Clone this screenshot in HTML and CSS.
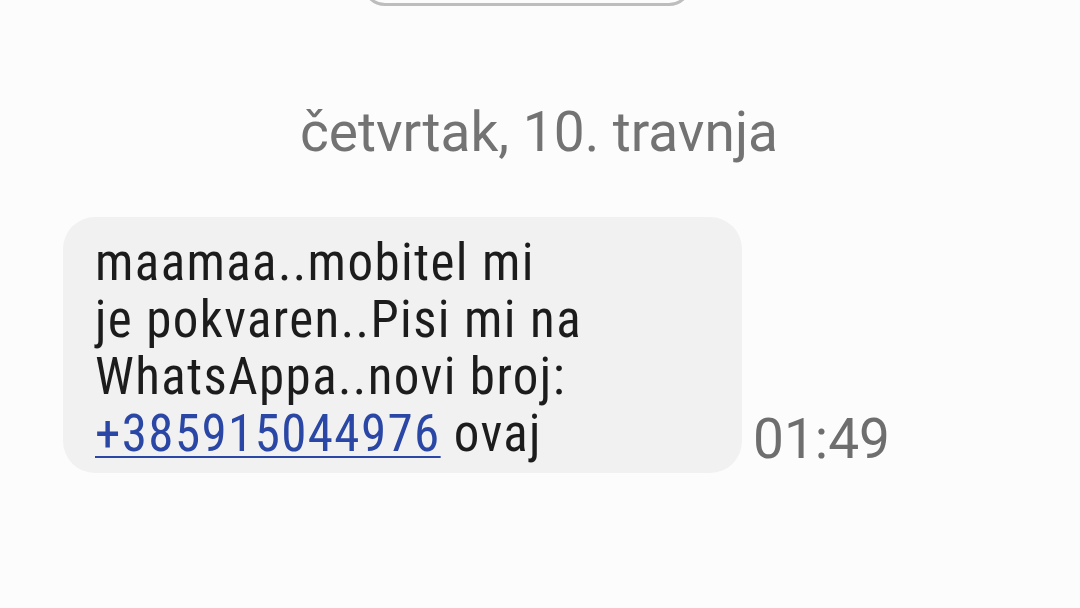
FILE: index.html
```html
<!DOCTYPE html>
<html lang="hr">
<head>
    <meta charset="UTF-8">
    <meta name="viewport" content="width=device-width, initial-scale=1.0">
    <title>Poruke</title>
    <link rel="stylesheet" href="styles.css">
</head>
<body>
    <div class="top-pill"></div>

    <div class="date-sep">četvrtak, 10. travnja</div>

    <div class="msg-row">
        <div class="bubble">
            <p class="msg-text">maamaa..mobitel mi<br>je pokvaren..Pisi mi na<br>WhatsAppa..novi broj:<br><a href="#" class="phone">+385915044976</a> ovaj</p>
        </div>
        <span class="msg-time">01:49</span>
    </div>
</body>
</html>
```

FILE: styles.css
```css
html, body {
    margin: 0;
    padding: 0;
    background: #fcfcfc;
    height: 608px;
    overflow: hidden;
}

body {
    font-family: Roboto, "Noto Sans", sans-serif;
    display: flex;
    flex-direction: column;
}

.top-pill {
    align-self: flex-start;
    margin-left: 362px;
    margin-top: -40px;
    width: 324px;
    height: 40px;
    border: 3px solid #bdbdbd;
    border-radius: 24px;
}

.date-sep {
    margin-top: 96px;
    text-align: center;
    font-size: 55px;
    line-height: 60px;
    color: #737373;
    width: 1078px;
}

.msg-row {
    display: flex;
    align-items: flex-end;
    margin-top: 55px;
    padding-left: 63px;
}

.bubble {
    width: 679px;
    height: 256px;
    box-sizing: border-box;
    background: #f1f1f1;
    border-radius: 32px;
    padding: 17px 32px 0;
}

.msg-text {
    margin: 0;
    font-size: 51px;
    line-height: 57px;
    letter-spacing: 1.4px;
    color: #1c1c1c;
    font-stretch: 80%;
}

.phone {
    color: #2a47a6;
    text-decoration: underline;
    text-decoration-thickness: 2px;
    text-underline-offset: 5px;
}

.msg-time {
    margin-left: 11px;
    margin-bottom: 4px;
    font-size: 55px;
    line-height: 60px;
    color: #6e6e6e;
}
```
